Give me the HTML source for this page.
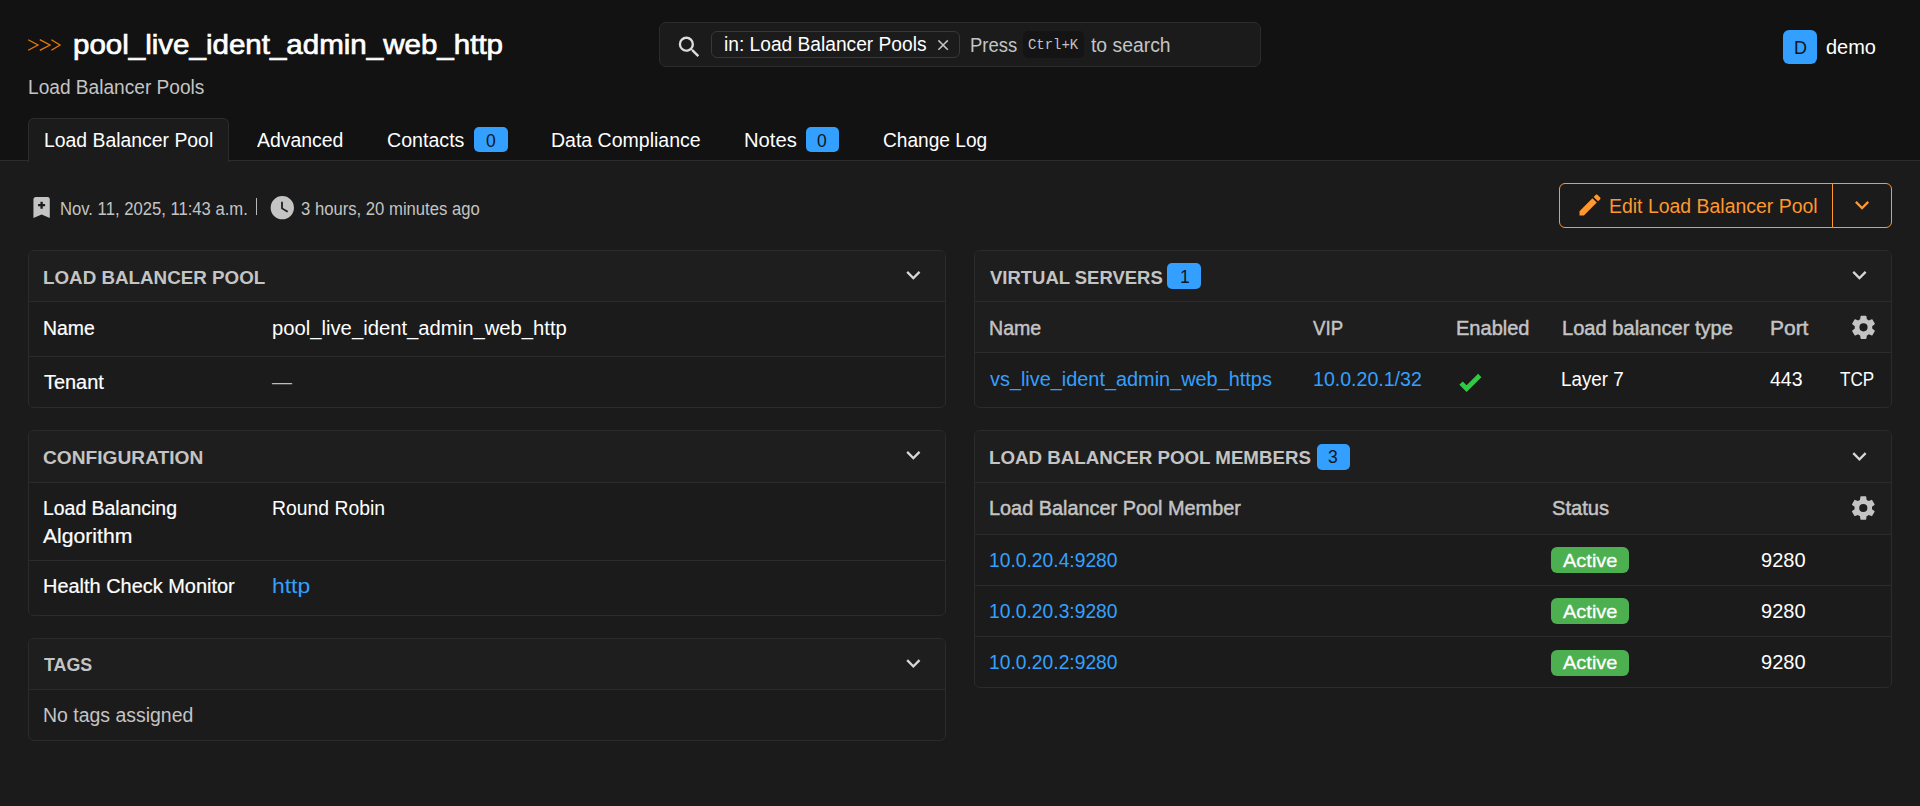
<!DOCTYPE html><html lang="en"><head><meta charset="utf-8"><title>pool_live_ident_admin_web_http - Load Balancer Pools</title>
<style>
*{box-sizing:border-box;margin:0;padding:0}
html,body{width:1920px;height:806px;overflow:hidden}
body{position:relative;background:#1b1b1b;font-family:"Liberation Sans", sans-serif;font-size:20px;color:#fff;-webkit-font-smoothing:antialiased}
a{text-decoration:none}
h1,h2{font-weight:400}
.abs,.t,.ic,.card,.chd,.row,.badge,.st{position:absolute}
.t{line-height:1;white-space:nowrap;display:block;transform-origin:0 50%}
.ic{display:block;overflow:visible}
header.top{position:absolute;left:0;top:0;width:1920px;height:160px;background:#121212}
.hline{position:absolute;left:0;top:160px;width:1920px;height:1px;background:#2c2c2c}
.search{position:absolute;left:659px;top:22px;width:602px;height:45px;border:1px solid #2c2c2c;border-radius:7px;background:#1b1b1b}
.stag{position:absolute;border:1px solid #383838;border-radius:6px;background:#1b1b1b}
.kbd{position:absolute;border-radius:5px;background:#141414}
.avatar{position:absolute;left:1783px;top:30px;width:34px;height:34px;border-radius:6px;background:#33a0ff}
.tabact{position:absolute;left:28px;top:118px;width:201px;height:44px;border:1px solid #2c2c2c;border-bottom:0;border-radius:6px 6px 0 0;background:#1b1b1b}
.badge{background:#33a0ff;border-radius:5px}
.card{border:1px solid #2b2b2b;border-radius:6px;background:#1b1b1b;overflow:hidden}
.chd{left:0;top:0;width:100%;background:#1e1e1e;border-bottom:1px solid #2b2b2b}
.row{left:0;width:100%}
.ln{background:#2b2b2b}
.th{background:#1e1e1e;border-bottom:1px solid #2b2b2b}
.btngrp{position:absolute}
.btn{position:absolute;border:1px solid #ff982d;background:transparent}
.st{background:#4caf50;border-radius:6px}
.vbar{position:absolute;left:256px;top:198px;width:1px;height:17px;background:#b8b8b8}
.dash{position:absolute;height:1.5px;background:#bdbdbd}
</style></head><body>
<header class="top">
<svg class="ic" style="left:20px;top:30px;width:50px;height:30px" viewBox="20 30 50 30" aria-hidden="true"><g fill="none" stroke="#ea7b06" stroke-width="1.3" stroke-linejoin="miter" stroke-linecap="butt"><path d="M28.2 39.7 L38.0 45 L28.2 50.3"/><path d="M39.8 39.7 L50.0 45 L39.8 50.3"/><path d="M51.4 39.7 L60.0 45 L51.4 50.3"/></g></svg>
<h1 id="title" class="t" style="left:73.00px;top:31.00px;font-size:28px;color:#ffffff;transform:scaleX(1.0543);-webkit-text-stroke:0.7px #ffffff;">pool_live_ident_admin_web_http</h1>
<span id="sub" class="t" style="left:28.00px;top:77.01px;font-size:20px;color:#c4c4c4;transform:scaleX(0.9558);">Load Balancer Pools</span>
<form class="search" role="search">
<svg class="ic" style="left:15px;top:10px;width:28px;height:28px" viewBox="0 0 24 24" aria-hidden="true"><path fill="#dcdcdc" transform="translate(0.250 0.079)" d="M9.5,3A6.5,6.5 0 0,1 16,9.5C16,11.11 15.41,12.59 14.44,13.73L14.71,14H15.5L20.5,19L19,20.5L14,15.5V14.71L13.73,14.44C12.59,15.41 11.11,16 9.5,16A6.5,6.5 0 0,1 3,9.5A6.5,6.5 0 0,1 9.5,3M9.5,5C7,5 5,7 5,9.5C5,12 7,14 9.5,14C12,14 14,12 14,9.5C14,7 12,5 9.5,5Z"/></svg>
<div class="stag" style="left:51px;top:8px;width:249px;height:27px"></div>
<span id="s_in" class="t" style="left:64.00px;top:11.01px;font-size:20px;color:#ffffff;transform:scaleX(0.9587);">in: Load Balancer Pools</span>
<svg class="ic" style="left:274px;top:13px;width:18px;height:18px" viewBox="0 0 24 24" aria-hidden="true"><path fill="#c4c4c4" transform="translate(0.133 0.133)" d="M19,6.41L17.59,5L12,10.59L6.41,5L5,6.41L10.59,12L5,17.59L6.41,19L12,13.41L17.59,19L19,17.59L13.41,12L19,6.41Z"/></svg>
<span id="s_press" class="t" style="left:310.00px;top:12.01px;font-size:20px;color:#c4c4c4;transform:scaleX(0.9225);">Press</span>
<div class="kbd" style="left:363px;top:8px;width:61px;height:27px"></div>
<span id="s_kbd" class="t" style="left:368.00px;top:15.01px;font-size:15px;color:#c4c4c4;font-family:'Liberation Mono', monospace;transform:scaleX(0.9295);">Ctrl+K</span>
<span id="s_to" class="t" style="left:431.00px;top:12.01px;font-size:20px;color:#c4c4c4;transform:scaleX(0.9672);">to search</span>
</form>
<div class="avatar"></div>
<span id="av" class="t" style="left:1794.00px;top:39.01px;font-size:18px;color:#10151c;">D</span>
<span id="user" class="t" style="left:1826.00px;top:37.01px;font-size:20px;color:#ffffff;transform:scaleX(0.9990);">demo</span>
<nav><div class="tabact"></div>
<span id="tab1" class="t" style="left:44.00px;top:130.01px;font-size:20px;color:#ffffff;transform:scaleX(0.9693);">Load Balancer Pool</span>
<span id="tab2" class="t" style="left:257.00px;top:130.01px;font-size:20px;color:#ffffff;transform:scaleX(0.9714);">Advanced</span>
<span id="tab3" class="t" style="left:387.00px;top:130.01px;font-size:20px;color:#ffffff;transform:scaleX(0.9804);">Contacts</span>
<span class="badge" style="left:474px;top:127px;width:34px;height:25px"></span>
<span id="tab3b" class="t" style="left:486.00px;top:133.00px;font-size:17.5px;color:#10151c;">0</span>
<span id="tab4" class="t" style="left:551.00px;top:130.01px;font-size:20px;color:#ffffff;transform:scaleX(0.9752);">Data Compliance</span>
<span id="tab5" class="t" style="left:744.00px;top:130.01px;font-size:20px;color:#ffffff;transform:scaleX(1.0115);">Notes</span>
<span class="badge" style="left:806px;top:127px;width:33px;height:25px"></span>
<span id="tab5b" class="t" style="left:817.00px;top:133.00px;font-size:17.5px;color:#10151c;">0</span>
<span id="tab6" class="t" style="left:883.00px;top:130.01px;font-size:20px;color:#ffffff;transform:scaleX(0.9563);">Change Log</span>
</nav></header><div class="hline"></div><div class="abs" style="left:29px;top:160px;width:199px;height:1px;background:#1b1b1b"></div>
<main>
<svg class="ic" style="left:27px;top:193px;width:28px;height:28px" viewBox="0 0 24 24" aria-hidden="true"><path fill="#c4c4c4" transform="translate(0.514 0.429)" d="M17,3A2,2 0 0,1 19,5V21L12,18L5,21V5C5,3.89 5.9,3 7,3H17M11,7V9H9V11H11V13H13V11H15V9H13V7H11Z"/></svg>
<span id="m1" class="t" style="left:60.00px;top:201.01px;font-size:17.5px;color:#c4c4c4;transform:scaleX(0.9512);">Nov. 11, 2025, 11:43 a.m.</span>
<span class="vbar"></span>
<svg class="ic" style="left:268px;top:193px;width:28px;height:28px" viewBox="0 0 24 24" aria-hidden="true"><path fill="#c4c4c4" transform="translate(0.257 0.600)" d="M12,2A10,10 0 0,0 2,12A10,10 0 0,0 12,22A10,10 0 0,0 22,12A10,10 0 0,0 12,2M16.2,16.2L11,13V7H12.5V12.2L17,14.9L16.2,16.2Z"/></svg>
<span id="m2" class="t" style="left:301.00px;top:201.01px;font-size:17.5px;color:#c4c4c4;transform:scaleX(0.9522);">3 hours, 20 minutes ago</span>
<div class="btngrp" role="group" style="left:1559px;top:183px;width:333px;height:45px">
<div class="btn" style="left:0px;top:0px;width:274px;height:45px;border-radius:6px 0 0 6px"></div>
<div class="btn" style="left:273px;top:0px;width:60px;height:45px;border-radius:0 6px 6px 0"></div>
<svg class="ic" style="left:17px;top:8px;width:28px;height:28px" viewBox="0 0 24 24" aria-hidden="true"><path fill="#ff982d" transform="translate(0.000 0.000)" d="M20.71,7.04C21.1,6.65 21.1,6 20.71,5.63L18.37,3.29C18,2.9 17.35,2.9 16.96,3.29L15.12,5.12L18.87,8.87M3,17.25V21H6.75L17.81,9.93L14.06,6.18L3,17.25Z"/></svg>
<span id="edit" class="t" style="left:50.00px;top:13.01px;font-size:20px;color:#ff982d;transform:scaleX(0.9723);">Edit Load Balancer Pool</span>
<svg class="ic" style="left:289px;top:8px;width:28px;height:28px" viewBox="0 0 24 24" aria-hidden="true"><path fill="#ff982d" transform="translate(0.043 0.010)" d="M7.41,8.58L12,13.17L16.59,8.58L18,10L12,16L6,10L7.41,8.58Z"/></svg>
</div>
<section class="card" aria-label="Load Balancer Pool" style="left:28px;top:250px;width:918px;height:158px"><div class="chd" style="height:51px"></div><div class="row ln" style="top:105px;height:1px"></div>
<h2 id="c1h" class="t" style="left:14.00px;top:18.01px;font-size:18.5px;color:#c4c4c4;font-weight:700;transform:scaleX(1.0154);">LOAD BALANCER POOL</h2>
<svg class="ic" style="left:870px;top:10px;width:28px;height:28px" viewBox="0 0 24 24" aria-hidden="true"><path fill="#d6d6d6" transform="translate(0.300 0.053)" d="M7.41,8.58L12,13.17L16.59,8.58L18,10L12,16L6,10L7.41,8.58Z"/></svg>
<span id="c1a" class="t" style="left:14.00px;top:67.01px;font-size:20px;color:#ffffff;transform:scaleX(0.9710);-webkit-text-stroke:0.2px #ffffff;">Name</span>
<span id="c1av" class="t" style="left:243.00px;top:67.01px;font-size:20px;color:#ffffff;transform:scaleX(1.0118);">pool_live_ident_admin_web_http</span>
<span id="c1b" class="t" style="left:15.00px;top:121.00px;font-size:20px;color:#ffffff;transform:scaleX(0.9959);-webkit-text-stroke:0.2px #ffffff;">Tenant</span>
<span id="c1bv" class="t" style="left:243.00px;top:121.00px;font-size:20px;color:#bdbdbd;">—</span>
</section>
<section class="card" aria-label="Configuration" style="left:28px;top:430px;width:918px;height:186px"><div class="chd" style="height:52px"></div><div class="row ln" style="top:129px;height:1px"></div>
<h2 id="c2h" class="t" style="left:14.00px;top:18.01px;font-size:18.5px;color:#c4c4c4;font-weight:700;transform:scaleX(1.0354);">CONFIGURATION</h2>
<svg class="ic" style="left:870px;top:10px;width:28px;height:28px" viewBox="0 0 24 24" aria-hidden="true"><path fill="#d6d6d6" transform="translate(0.300 0.053)" d="M7.41,8.58L12,13.17L16.59,8.58L18,10L12,16L6,10L7.41,8.58Z"/></svg>
<span id="c2a1" class="t" style="left:14.00px;top:67.01px;font-size:20px;color:#ffffff;transform:scaleX(0.9713);-webkit-text-stroke:0.2px #ffffff;">Load Balancing</span>
<span id="c2a2" class="t" style="left:14.00px;top:95.01px;font-size:20px;color:#ffffff;transform:scaleX(1.0570);-webkit-text-stroke:0.2px #ffffff;">Algorithm</span>
<span id="c2av" class="t" style="left:243.00px;top:67.01px;font-size:20px;color:#ffffff;transform:scaleX(0.9680);">Round Robin</span>
<span id="c2b" class="t" style="left:14.00px;top:145.01px;font-size:20px;color:#ffffff;transform:scaleX(0.9971);-webkit-text-stroke:0.2px #ffffff;">Health Check Monitor</span>
<a id="c2bv" class="t" style="left:243.00px;top:145.01px;font-size:20px;color:#33a0ff;transform:scaleX(1.1446);" href="#">http</a>
</section>
<section class="card" aria-label="Tags" style="left:28px;top:638px;width:918px;height:103px"><div class="chd" style="height:51px"></div>
<h2 id="c3h" class="t" style="left:15.00px;top:17.00px;font-size:18.5px;color:#c4c4c4;font-weight:700;transform:scaleX(0.9639);">TAGS</h2>
<svg class="ic" style="left:870px;top:10px;width:28px;height:28px" viewBox="0 0 24 24" aria-hidden="true"><path fill="#d6d6d6" transform="translate(0.300 0.310)" d="M7.41,8.58L12,13.17L16.59,8.58L18,10L12,16L6,10L7.41,8.58Z"/></svg>
<span id="c3a" class="t" style="left:14.00px;top:66.01px;font-size:20px;color:#c4c4c4;transform:scaleX(0.9723);">No tags assigned</span>
</section>
<section class="card" aria-label="Virtual Servers" style="left:974px;top:250px;width:918px;height:158px"><div class="chd" style="height:51px"></div><div class="row th" style="top:51px;height:51px"></div>
<h2 id="c4h" class="t" style="left:15.00px;top:18.01px;font-size:18.5px;color:#c4c4c4;font-weight:700;transform:scaleX(0.9981);">VIRTUAL SERVERS</h2>
<span class="badge" style="left:192px;top:12px;width:34px;height:26px"></span>
<span id="c4hb" class="t" style="left:205.00px;top:18.01px;font-size:17.5px;color:#10151c;">1</span>
<svg class="ic" style="left:870px;top:10px;width:28px;height:28px" viewBox="0 0 24 24" aria-hidden="true"><path fill="#d6d6d6" transform="translate(0.386 0.053)" d="M7.41,8.58L12,13.17L16.59,8.58L18,10L12,16L6,10L7.41,8.58Z"/></svg>
<span id="c4t1" class="t" style="left:14.00px;top:67.01px;font-size:20px;color:#c4c4c4;transform:scaleX(0.9797);-webkit-text-stroke:0.45px #c4c4c4;">Name</span>
<span id="c4t2" class="t" style="left:338.00px;top:67.01px;font-size:20px;color:#c4c4c4;transform:scaleX(0.9336);-webkit-text-stroke:0.45px #c4c4c4;">VIP</span>
<span id="c4t3" class="t" style="left:481.00px;top:67.01px;font-size:20px;color:#c4c4c4;transform:scaleX(1.0011);-webkit-text-stroke:0.45px #c4c4c4;">Enabled</span>
<span id="c4t4" class="t" style="left:587.00px;top:67.01px;font-size:20px;color:#c4c4c4;transform:scaleX(1.0049);-webkit-text-stroke:0.45px #c4c4c4;">Load balancer type</span>
<span id="c4t5" class="t" style="left:795.00px;top:67.01px;font-size:20px;color:#c4c4c4;transform:scaleX(1.0478);-webkit-text-stroke:0.45px #c4c4c4;">Port</span>
<svg class="ic" style="left:874px;top:62px;width:28px;height:28px" viewBox="0 0 24 24" aria-hidden="true"><path fill="#c4c4c4" transform="translate(0.429 0.300)" d="M12,15.5A3.5,3.5 0 0,1 8.5,12A3.5,3.5 0 0,1 12,8.5A3.5,3.5 0 0,1 15.5,12A3.5,3.5 0 0,1 12,15.5M19.43,12.97C19.47,12.65 19.5,12.33 19.5,12C19.5,11.67 19.47,11.34 19.43,11L21.54,9.37C21.73,9.22 21.78,8.95 21.66,8.73L19.66,5.27C19.54,5.05 19.27,4.96 19.05,5.05L16.56,6.05C16.04,5.66 15.5,5.32 14.87,5.07L14.5,2.42C14.46,2.18 14.25,2 14,2H10C9.75,2 9.54,2.18 9.5,2.42L9.13,5.07C8.5,5.32 7.96,5.66 7.44,6.05L4.95,5.05C4.73,4.96 4.46,5.05 4.34,5.27L2.34,8.73C2.21,8.95 2.27,9.22 2.46,9.37L4.57,11C4.53,11.34 4.5,11.67 4.5,12C4.5,12.33 4.53,12.65 4.57,12.97L2.46,14.63C2.27,14.78 2.21,15.05 2.34,15.27L4.34,18.73C4.46,18.95 4.73,19.03 4.95,18.95L7.44,17.94C7.96,18.34 8.5,18.68 9.13,18.93L9.5,21.58C9.54,21.82 9.75,22 10,22H14C14.25,22 14.46,21.82 14.5,21.58L14.87,18.93C15.5,18.67 16.04,18.34 16.56,17.94L19.05,18.95C19.27,19.03 19.54,18.95 19.66,18.73L21.66,15.27C21.78,15.05 21.73,14.78 21.54,14.63L19.43,12.97Z"/></svg>
<a id="c4d1" class="t" style="left:15.00px;top:118.00px;font-size:20px;color:#33a0ff;transform:scaleX(0.9941);" href="#">vs_live_ident_admin_web_https</a>
<a id="c4d2" class="t" style="left:338.00px;top:118.00px;font-size:20px;color:#33a0ff;transform:scaleX(0.9782);" href="#">10.0.20.1/32</a>
<svg class="ic" style="left:481px;top:117px;width:28px;height:28px" viewBox="0 0 24 24" aria-hidden="true"><path fill="#2ecc40" transform="translate(0.093 0.121)" d="M9,20.42L2.79,14.21L5.62,11.38L9,14.77L18.88,4.88L21.71,7.71L9,20.42Z"/></svg>
<span id="c4d4" class="t" style="left:586.00px;top:118.00px;font-size:20px;color:#ffffff;transform:scaleX(0.9400);">Layer 7</span>
<span id="c4d5" class="t" style="left:795.00px;top:118.00px;font-size:20px;color:#ffffff;transform:scaleX(0.9749);">443</span>
<span id="c4d6" class="t" style="left:865.00px;top:118.00px;font-size:20px;color:#ffffff;transform:scaleX(0.8539);">TCP</span>
</section>
<section class="card" aria-label="Load Balancer Pool Members" style="left:974px;top:430px;width:918px;height:258px"><div class="chd" style="height:52px"></div><div class="row th" style="top:52px;height:52px"></div><div class="row ln" style="top:154px;height:1px"></div><div class="row ln" style="top:205px;height:1px"></div>
<h2 id="c5h" class="t" style="left:14.00px;top:18.01px;font-size:18.5px;color:#c4c4c4;font-weight:700;transform:scaleX(1.0115);">LOAD BALANCER POOL MEMBERS</h2>
<span class="badge" style="left:342px;top:13px;width:33px;height:26px"></span>
<span id="c5hb" class="t" style="left:353.00px;top:18.01px;font-size:17.5px;color:#10151c;">3</span>
<svg class="ic" style="left:870px;top:11px;width:28px;height:28px" viewBox="0 0 24 24" aria-hidden="true"><path fill="#d6d6d6" transform="translate(0.386 0.224)" d="M7.41,8.58L12,13.17L16.59,8.58L18,10L12,16L6,10L7.41,8.58Z"/></svg>
<span id="c5t1" class="t" style="left:14.00px;top:67.01px;font-size:20px;color:#c4c4c4;transform:scaleX(0.9938);-webkit-text-stroke:0.45px #c4c4c4;">Load Balancer Pool Member</span>
<span id="c5t2" class="t" style="left:577.00px;top:67.01px;font-size:20px;color:#c4c4c4;transform:scaleX(1.0075);-webkit-text-stroke:0.45px #c4c4c4;">Status</span>
<svg class="ic" style="left:874px;top:63px;width:28px;height:28px" viewBox="0 0 24 24" aria-hidden="true"><path fill="#c4c4c4" transform="translate(0.257 0.000)" d="M12,15.5A3.5,3.5 0 0,1 8.5,12A3.5,3.5 0 0,1 12,8.5A3.5,3.5 0 0,1 15.5,12A3.5,3.5 0 0,1 12,15.5M19.43,12.97C19.47,12.65 19.5,12.33 19.5,12C19.5,11.67 19.47,11.34 19.43,11L21.54,9.37C21.73,9.22 21.78,8.95 21.66,8.73L19.66,5.27C19.54,5.05 19.27,4.96 19.05,5.05L16.56,6.05C16.04,5.66 15.5,5.32 14.87,5.07L14.5,2.42C14.46,2.18 14.25,2 14,2H10C9.75,2 9.54,2.18 9.5,2.42L9.13,5.07C8.5,5.32 7.96,5.66 7.44,6.05L4.95,5.05C4.73,4.96 4.46,5.05 4.34,5.27L2.34,8.73C2.21,8.95 2.27,9.22 2.46,9.37L4.57,11C4.53,11.34 4.5,11.67 4.5,12C4.5,12.33 4.53,12.65 4.57,12.97L2.46,14.63C2.27,14.78 2.21,15.05 2.34,15.27L4.34,18.73C4.46,18.95 4.73,19.03 4.95,18.95L7.44,17.94C7.96,18.34 8.5,18.68 9.13,18.93L9.5,21.58C9.54,21.82 9.75,22 10,22H14C14.25,22 14.46,21.82 14.5,21.58L14.87,18.93C15.5,18.67 16.04,18.34 16.56,17.94L19.05,18.95C19.27,19.03 19.54,18.95 19.66,18.73L21.66,15.27C21.78,15.05 21.73,14.78 21.54,14.63L19.43,12.97Z"/></svg>
<a id="c5r0a" class="t" style="left:14.00px;top:119.00px;font-size:20px;color:#33a0ff;transform:scaleX(0.9632);" href="#">10.0.20.4:9280</a>
<span class="st" style="left:576px;top:116px;width:78px;height:26px"></span>
<span id="c5r0b" class="t" style="left:588.00px;top:120.01px;font-size:19px;color:#ffffff;transform:scaleX(1.0519);-webkit-text-stroke:0.3px #ffffff;">Active</span>
<span id="c5r0c" class="t" style="left:786.00px;top:119.00px;font-size:20px;color:#ffffff;transform:scaleX(1.0022);">9280</span>
<a id="c5r1a" class="t" style="left:14.00px;top:170.00px;font-size:20px;color:#33a0ff;transform:scaleX(0.9632);" href="#">10.0.20.3:9280</a>
<span class="st" style="left:576px;top:167px;width:78px;height:26px"></span>
<span id="c5r1b" class="t" style="left:588.00px;top:171.01px;font-size:19px;color:#ffffff;transform:scaleX(1.0519);-webkit-text-stroke:0.3px #ffffff;">Active</span>
<span id="c5r1c" class="t" style="left:786.00px;top:170.00px;font-size:20px;color:#ffffff;transform:scaleX(1.0022);">9280</span>
<a id="c5r2a" class="t" style="left:14.00px;top:221.01px;font-size:20px;color:#33a0ff;transform:scaleX(0.9632);" href="#">10.0.20.2:9280</a>
<span class="st" style="left:576px;top:219px;width:78px;height:26px"></span>
<span id="c5r2b" class="t" style="left:588.00px;top:222.00px;font-size:19px;color:#ffffff;transform:scaleX(1.0519);-webkit-text-stroke:0.3px #ffffff;">Active</span>
<span id="c5r2c" class="t" style="left:786.00px;top:221.01px;font-size:20px;color:#ffffff;transform:scaleX(1.0022);">9280</span>
</section>
</main></body></html>
